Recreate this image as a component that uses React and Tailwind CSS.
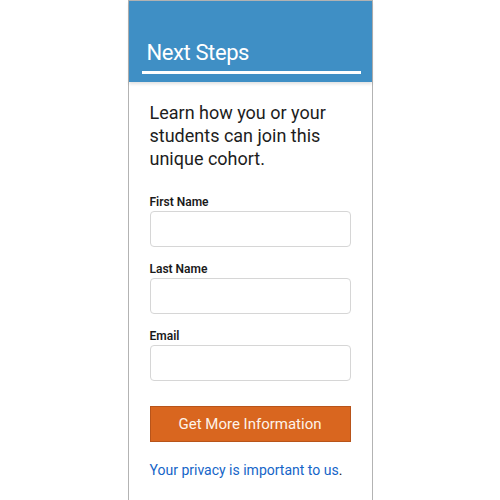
export default function App() {
    const fields = ["First Name", "Last Name", "Email"];

    return (
        <div className="min-h-[500px] bg-white">
            <div className="mx-auto w-[245px] min-h-[500px] border border-b-0 border-[#b3b3b3] bg-white">
                <div className="h-[81px] bg-[#3f8fc5] pl-[13px] pr-[11px] pt-[39px] shadow-[0_2px_3px_rgba(0,0,0,0.12)]">
                    <h2 className="pl-[5px] text-[22px] leading-[26px] tracking-[-0.4px] text-white font-['Roboto',sans-serif]">
                        Next Steps
                    </h2>
                    <div className="mt-[5px] h-[3px] bg-white" />
                </div>

                <div className="px-[21px] pt-[19px] font-['Roboto',sans-serif]">
                    <p className="text-[18px] leading-[23px] text-[#1d1d1d]">
                        Learn how you or your students can join this unique cohort.
                    </p>

                    <form className="mt-[24px] flex flex-col gap-[14px]">
                        {fields.map((label) => (
                            <label key={label} className="flex flex-col">
                                <span className="text-[12px] leading-[16px] font-semibold text-[#1a1a1a]">
                                    {label}
                                </span>
                                <input
                                    type="text"
                                    className="mt-[1px] h-[36px] w-full rounded-[4px] border border-[#d6d6d6] bg-white px-2 outline-none"
                                />
                            </label>
                        ))}
                    </form>

                    <button className="mt-[25px] h-[36px] w-full border border-[#b8541a] bg-[#d9661f] text-[15px] text-[#fdf3ea]">
                        Get More Information
                    </button>

                    <p className="mt-[18px] whitespace-nowrap text-[14px] leading-[20px] text-[#1565c8]">
                        Your privacy is important to us<span className="text-[#1a1a1a]">.</span>
                    </p>
                </div>
            </div>
        </div>
    );
}
